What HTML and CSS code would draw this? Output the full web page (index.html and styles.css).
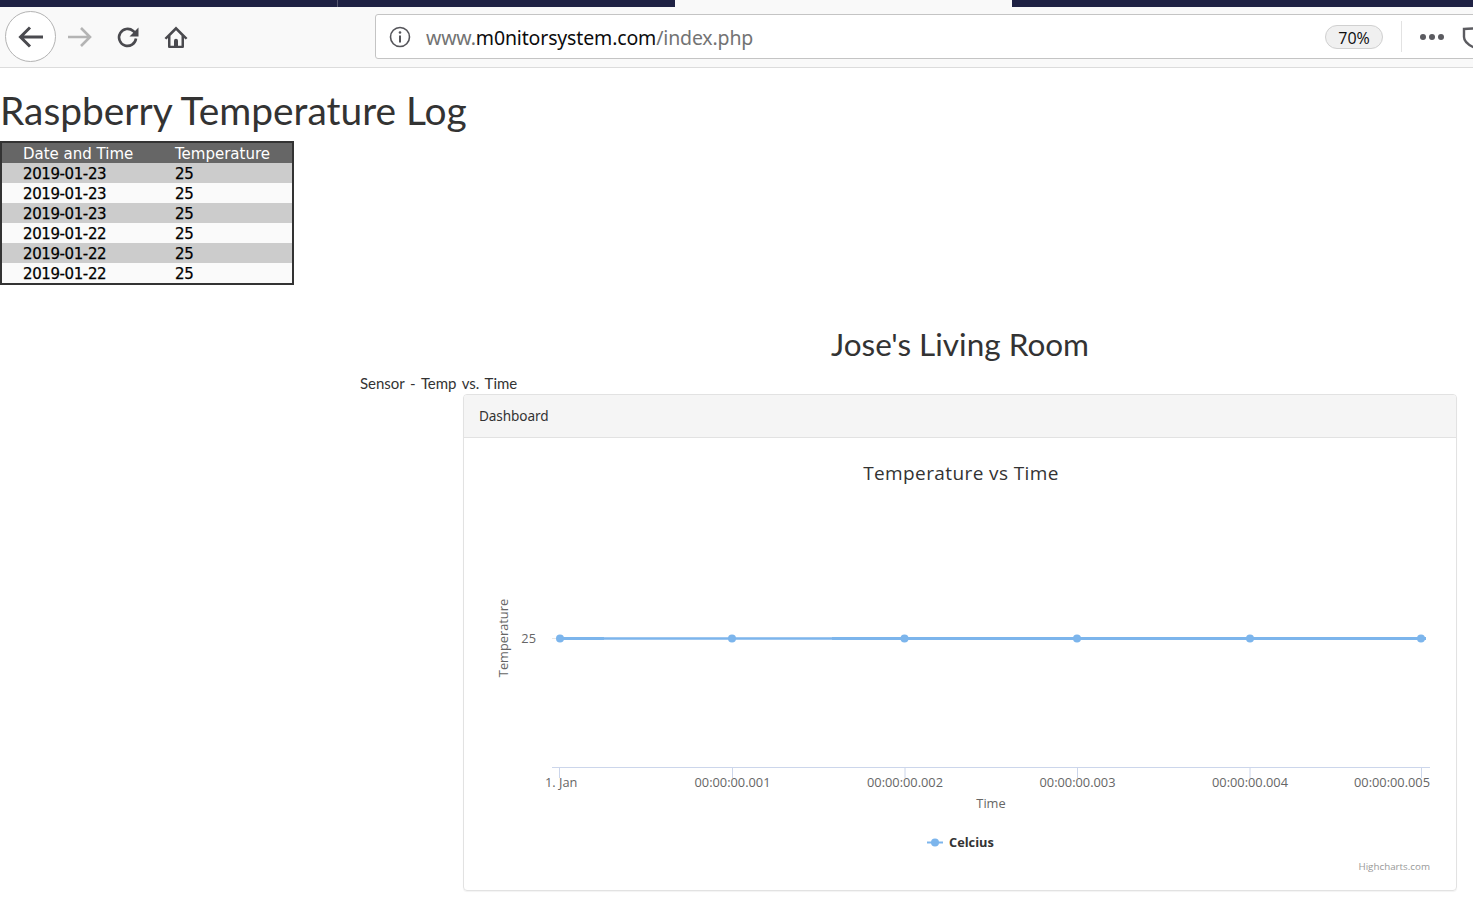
FILE: index.html
```html
<!DOCTYPE html>
<html lang="en">
<head>
<meta charset="utf-8">
<title>Raspberry Temperature Log</title>
<link rel="stylesheet" href="styles.css">
</head>
<body>
<div class="tabs">
  <div class="tab tab-dark"></div>
  <div class="tab tab-dark"></div>
  <div class="tab tab-active"></div>
  <div class="tab tab-dark tab-last"></div>
</div>
<div class="toolbar">
  <button class="btn-back" aria-label="Back">
    <svg width="28" height="28" viewBox="0 0 28 28"><path d="M26 14H4M13 4.500L3.500 14l9.500 9.500" fill="none" stroke="#4a4a4f" stroke-width="3"/></svg>
  </button>
  <span class="icon icon-forward"><svg width="26" height="26" viewBox="0 0 26 26"><path d="M1 13h22M14 4l9 9-9 9" fill="none" stroke="#b4b4b4" stroke-width="2.600"/></svg></span>
  <span class="icon icon-reload"><svg width="24" height="24" viewBox="0 0 24 24"><path d="M20 13.500a8.500 8.500 0 1 1-2.800-7.500L20 8.500" fill="none" stroke="#4a4a4f" stroke-width="2.600"/><path d="M22.500 2.500v9h-9z" fill="#4a4a4f"/></svg></span>
  <span class="icon icon-home"><svg width="26" height="26" viewBox="0 0 26 26"><path d="M13 2.500 1.500 14l1.800 1.600L5 14v8.500c0 1 .7 1.500 1.500 1.500h13c.8 0 1.500-.5 1.500-1.500V14l1.700 1.600 1.800-1.600z" fill="#4a4a4f"/><path d="M13 6.200 7.500 11.700V21.800H11v-5a2 2 0 0 1 4 0v5h3.500V11.700z" fill="#f9f9f9"/><rect x="11.200" y="18" width="3.600" height="4" fill="#4a4a4f"/></svg></span>
  <div class="urlbar">
    <svg class="info" width="22" height="22" viewBox="0 0 22 22"><circle cx="11" cy="11" r="9.500" fill="none" stroke="#55555a" stroke-width="1.600"/><rect x="10" y="9.500" width="2" height="7" fill="#55555a"/><circle cx="11" cy="6.500" r="1.300" fill="#55555a"/></svg>
    <span class="url"><span class="url-dim">www.</span>m0nitorsystem.com<span class="url-dim">/index.php</span></span>
    <span class="zoom">70%</span>
    <span class="divider"></span>
    <span class="dots"><i></i><i></i><i></i></span>
    <svg class="shield" width="22" height="24" viewBox="0 0 22 24"><path d="M2 3c6 0 12-1 18-1v9c0 5-5 8-9 10-4-2-9-5-9-10z" fill="none" stroke="#5b5b60" stroke-width="2.400"/><path d="M11 5c3 0 5-.4 7-.6V11l-7 5z" fill="#5b5b60"/></svg>
  </div>
</div>

<h1 class="page-title">Raspberry Temperature Log</h1>

<table class="log">
  <thead>
    <tr><th class="c1">Date and Time</th><th class="c2">Temperature</th></tr>
  </thead>
  <tbody>
    <tr><td>2019-01-23</td><td>25</td></tr>
    <tr><td>2019-01-23</td><td>25</td></tr>
    <tr><td>2019-01-23</td><td>25</td></tr>
    <tr><td>2019-01-22</td><td>25</td></tr>
    <tr><td>2019-01-22</td><td>25</td></tr>
    <tr><td>2019-01-22</td><td>25</td></tr>
  </tbody>
</table>

<h2 class="room">Jose's Living Room</h2>
<p class="sensor">Sensor - Temp vs. Time</p>

<section class="card">
  <div class="card-head">Dashboard</div>
  <div class="card-body">
    <svg class="chart" width="992" height="452" viewBox="464 438 992 452">
      <text class="c-title" x="961" y="480" text-anchor="middle">Temperature vs Time</text>
      <text class="c-axis-title" transform="translate(508 638) rotate(-90)" text-anchor="middle">Temperature</text>
      <text class="c-label" x="536" y="643" text-anchor="end">25</text>
      <path d="M552 638.500h8" stroke="#e6e6e6" stroke-width="1"/>
      <path d="M560 638.500H1421" stroke="#a9cdf2" stroke-width="3"/>
      <path d="M560 638.500H604M832 638.500H1426" stroke="#7cb5ec" stroke-width="3"/>
      <path d="M604 638.500H832" stroke="#7cb5ec" stroke-width="1.500"/>
      <g fill="#7cb5ec">
        <circle cx="560" cy="638.500" r="4"/><circle cx="732" cy="638.500" r="4"/><circle cx="904.500" cy="638.500" r="4"/>
        <circle cx="1077" cy="638.500" r="4"/><circle cx="1250" cy="638.500" r="4"/><circle cx="1421" cy="638.500" r="4"/>
      </g>
      <path d="M552 767.500H1430M559.500 768v10M732.500 768v10M905 768v10M1077.500 768v10M1250 768v10M1421.500 768v10" stroke="#ccd6eb" stroke-width="1" fill="none"/>
      <text class="c-label" x="545" y="787">1. Jan</text>
      <text class="c-label" x="732.500" y="787" text-anchor="middle">00:00:00.001</text>
      <text class="c-label" x="905" y="787" text-anchor="middle">00:00:00.002</text>
      <text class="c-label" x="1077.500" y="787" text-anchor="middle">00:00:00.003</text>
      <text class="c-label" x="1250" y="787" text-anchor="middle">00:00:00.004</text>
      <text class="c-label" x="1430" y="787" text-anchor="end">00:00:00.005</text>
      <text class="c-axis-title" x="991" y="808" text-anchor="middle">Time</text>
      <path d="M927 842.500h16" stroke="#7cb5ec" stroke-width="2"/>
      <circle cx="935" cy="842.500" r="4" fill="#7cb5ec"/>
      <text class="c-legend" x="949" y="847">Celcius</text>
      <text class="c-credit" x="1430" y="870" text-anchor="end">Highcharts.com</text>
    </svg>
  </div>
</section>
</body>
</html>
```

FILE: styles.css
```css
* { box-sizing: border-box; }
html, body { margin: 0; padding: 0; background: #fff; }
body { width: 1473px; height: 912px; overflow: hidden; font-family: "Open Sans", "Noto Sans", sans-serif; color: #333; }

.tabs { display: flex; height: 7px; }
.tab { width: 337.250px; }
.tab-dark { background: #1f2244; }
.tab-dark + .tab-dark { border-left: 1px solid #55576e; }
.tab-active { background: #f9f9f9; }
.tab-last { flex: 1; }

.toolbar { position: relative; height: 61px; background: #f9f9f9; border-bottom: 1px solid #dcdcdc; display: flex; align-items: center; padding: 0 0 1px 5px; }
.btn-back { width: 51px; height: 51px; margin: 0; padding: 0; flex: none; border: 1px solid #b3b3b3; border-radius: 50%; background: #fff; display: flex; align-items: center; justify-content: center; }
.icon { display: flex; align-items: center; justify-content: center; flex: none; }
.icon-forward { width: 26px; margin-left: 11px; }
.icon-reload { width: 24px; margin-left: 23px; }
.icon-home { width: 26px; margin-left: 23px; }

.urlbar { position: absolute; left: 375px; top: 7px; width: 1110px; height: 45px; background: #fff; border: 1px solid #c4c4c4; border-radius: 3px; display: flex; align-items: center; }
.info { margin-left: 13px; flex: none; }
.url { margin: 2px 0 0 15px; font-size: 19.500px; letter-spacing: -0.150px; color: #0c0c0d; white-space: nowrap; font-family: "Noto Sans", sans-serif; }
.url-dim { color: #737373; }
.zoom { position: absolute; left: 949px; top: 10px; width: 58px; height: 24px; border: 1px solid #d0d0d0; border-radius: 12px; background: #f0f0f0; font-size: 16px; line-height: 24px; text-align: center; color: #0c0c0d; }
.divider { position: absolute; left: 1025px; top: 6px; width: 1px; height: 31px; background: #e2e2e2; }
.dots { position: absolute; left: 1044px; top: 19px; display: flex; gap: 3px; }
.dots i { display: block; width: 6px; height: 6px; border-radius: 50%; background: #5b5b60; }
.shield { position: absolute; left: 1086px; top: 11px; }

.page-title { margin: 0; padding: 15px 0 0; font-family: Lato, sans-serif; font-size: 38.900px; line-height: 54px; font-weight: 400; color: #333; }

.log { margin: 4px 0 0; width: 294px; border: 2px solid #333; border-collapse: separate; border-spacing: 0; font-family: "DejaVu Sans", sans-serif; font-size: 15px; table-layout: fixed; }
.log th, .log td { height: 20px; padding: 2px 0 0 21px; line-height: 18px; text-align: left; font-weight: 400; color: #000; white-space: nowrap; }
.log .c1 { width: 152px; }
.log th { background: #666; color: #fff; }
.log td { letter-spacing: -0.400px; -webkit-text-stroke: .25px #000; }
.log tbody tr:nth-child(odd) td { background: #ccc; }
.log tbody tr:nth-child(even) td { background: #fafafa; }

.room { margin: 37px 0 0 463px; width: 994px; font-family: Lato, sans-serif; font-size: 31.500px; line-height: 44px; font-weight: 400; text-align: center; color: #333; }
.sensor { margin: 7px 0 0 360px; font-family: Lato, sans-serif; font-size: 15px; line-height: 20px; color: #333; word-spacing: 2px; letter-spacing: -.05px; }

.card { margin: 1px 0 0 463px; width: 994px; height: 497px; border: 1px solid #e2e2e2; border-radius: 4px; box-shadow: 0 1px 1px rgba(0,0,0,.05); overflow: hidden; }
.card-head { height: 43px; padding: 0 15px; line-height: 42px; background: #f5f5f5; border-bottom: 1px solid #e2e2e2; font-family: "Noto Sans", sans-serif; font-size: 13.600px; letter-spacing: -.1px; color: #333; }
.chart { display: block; }

.c-title { font: 400 19px "Open Sans", sans-serif; fill: #333; letter-spacing: .4px; }
.c-axis-title { font: 400 12.800px "Open Sans", sans-serif; fill: #666; }
.c-label { font: 400 12.800px "Open Sans", sans-serif; fill: #666; }
.c-legend { font: 700 12.800px "Open Sans", sans-serif; fill: #333; }
.c-credit { font: 400 9.800px "Open Sans", sans-serif; fill: #999; }
```
